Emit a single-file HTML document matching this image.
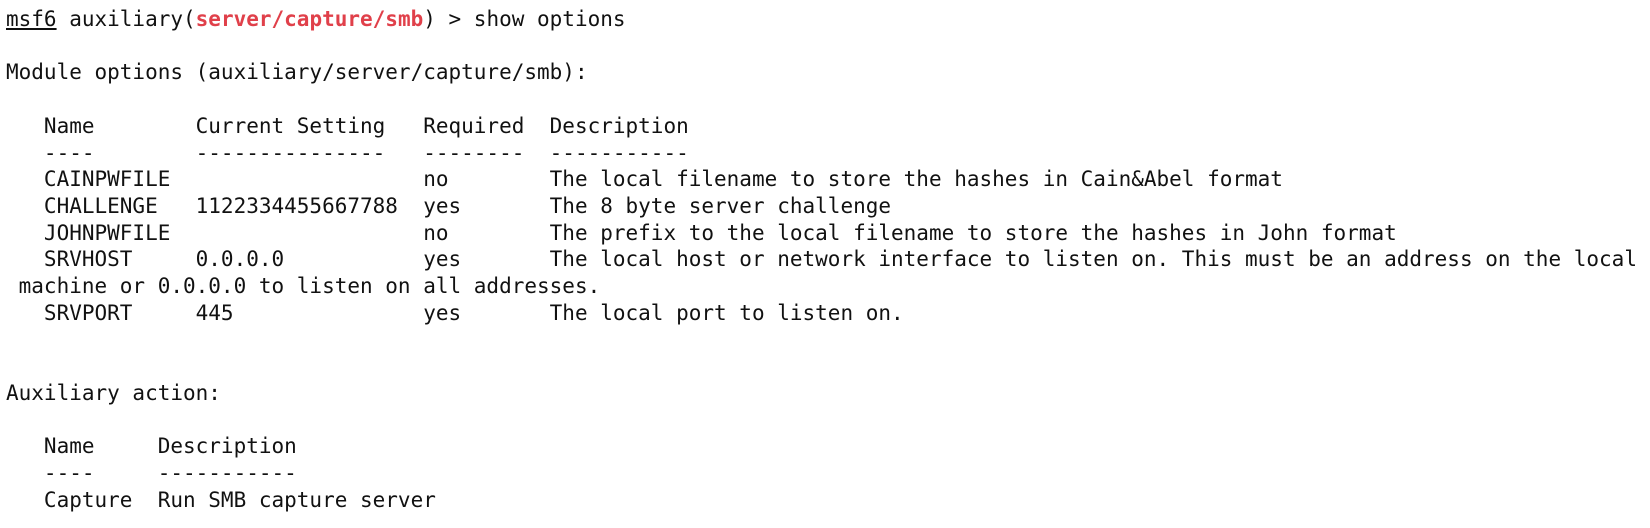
<!DOCTYPE html>
<html><head><meta charset="utf-8"><style>
html,body{margin:0;padding:0;background:#fff;width:1650px;height:528px;overflow:hidden}
pre{margin:0;position:absolute;left:6px;top:6px;font-family:"DejaVu Sans Mono","Liberation Mono",monospace;font-size:21px;line-height:26.7px;color:#111}
.r{color:#e0404a;font-weight:bold}
u{text-decoration:underline}
</style></head><body>
<pre><u>msf6</u> auxiliary(<span class="r">server/capture/smb</span>) &gt; show options

Module options (auxiliary/server/capture/smb):

   Name        Current Setting   Required  Description
   ----        ---------------   --------  -----------
   CAINPWFILE                    no        The local filename to store the hashes in Cain&amp;Abel format
   CHALLENGE   1122334455667788  yes       The 8 byte server challenge
   JOHNPWFILE                    no        The prefix to the local filename to store the hashes in John format
   SRVHOST     0.0.0.0           yes       The local host or network interface to listen on. This must be an address on the local
 machine or 0.0.0.0 to listen on all addresses.
   SRVPORT     445               yes       The local port to listen on.


Auxiliary action:

   Name     Description
   ----     -----------
   Capture  Run SMB capture server
</pre>
</body></html>
